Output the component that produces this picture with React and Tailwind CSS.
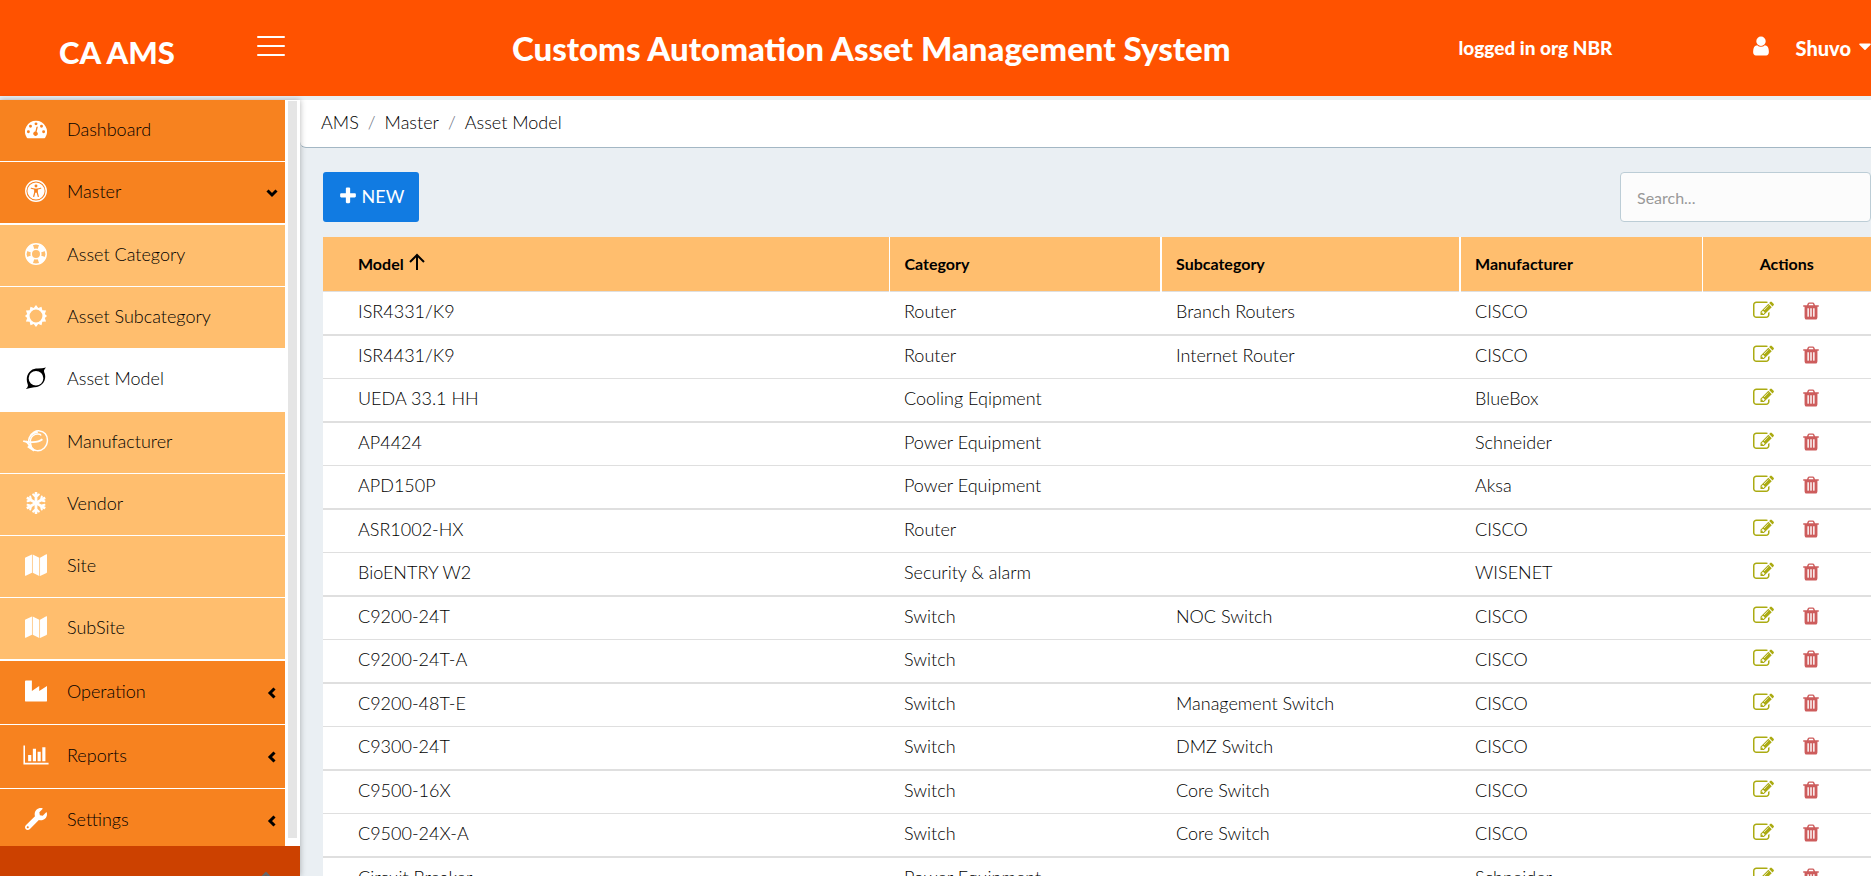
import { useState } from 'react'
import { FaSnowflake, FaWrench, FaChevronUp, FaCaretDown } from 'react-icons/fa'

const Svg = ({ box = '0 0 1792 1792', className, children }) => (
  <svg viewBox={box} className={className} fill="currentColor" aria-hidden="true">{children}</svg>
)

const Gauge = ({ className }) => (
  <Svg box="0 0 24 24" className={className}>
    <path fillRule="evenodd" d="M12 3A12 12 0 0 0 1.900 21.400Q2.200 22 2.900 22H21.100Q21.800 22 22.100 21.400A12 12 0 0 0 12 3ZM12 4.800a1.600 1.600 0 1 1 0 3.200a1.600 1.600 0 0 1 0-3.200ZM6 7.300a1.600 1.600 0 1 1 0 3.200a1.600 1.600 0 0 1 0-3.200ZM18 7.300a1.600 1.600 0 1 1 0 3.200a1.600 1.600 0 0 1 0-3.200ZM3.700 13.300a1.600 1.600 0 1 1 0 3.200a1.600 1.600 0 0 1 0-3.200ZM20.300 13.300a1.600 1.600 0 1 1 0 3.200a1.600 1.600 0 0 1 0-3.200ZM13.900 10.200L12.700 14.900A2.500 2.500 0 1 1 11.300 14.600L12.500 9.900Q12.800 9.200 13.400 9.300T13.900 10.200Z" />
  </Svg>
)

const Access = ({ className }) => (
  <svg viewBox="0 0 24 24" className={className} aria-hidden="true">
    <circle cx="12" cy="12" r="11.200" fill="none" stroke="currentColor" strokeWidth="1.500" />
    <circle cx="12" cy="12" r="9.400" fill="currentColor" />
    <circle cx="12" cy="6.600" r="1.600" fill="#f7821f" />
    <path d="M6.800 9L10.800 10V13L9.500 18M17.200 9L13.200 10V13L14.500 18" fill="none" stroke="#f7821f" strokeWidth="1.300" strokeLinecap="round" />
    <path d="M10.300 9.500H13.700V13.800H10.300Z" fill="#f7821f" />
  </svg>
)

const Ring = ({ className }) => (
  <svg viewBox="0 0 24 24" className={className} fill="none" stroke="currentColor" aria-hidden="true">
    <circle cx="12" cy="12" r="11.100" strokeWidth="1.700" />
    <circle cx="12" cy="12" r="5.200" strokeWidth="1.700" />
    <path d="M9.300 4A8.400 8.400 0 0 0 4 9.300M14.700 4A8.400 8.400 0 0 1 20 9.300M9.300 20A8.400 8.400 0 0 1 4 14.700M14.700 20A8.400 8.400 0 0 0 20 14.700" strokeWidth="6" />
  </svg>
)

const SunRing = ({ className }) => (
  <Svg box="0 0 24 24" className={className}>
    <path fillRule="evenodd" d="M12 0L14.500 3.300L18 1.800L18.900 5.700L23 5.900L21.600 9.800L24 12L21.600 14.200L23 18.100L18.900 18.300L18 22.200L14.500 20.700L12 24L9.500 20.700L6 22.200L5.100 18.300L1 18.100L2.400 14.200L0 12L2.400 9.800L1 5.900L5.100 5.700L6 1.800L9.500 3.300ZM12 5a7 7 0 1 0 0 14a7 7 0 0 0 0-14Z" />
  </Svg>
)

const Swirl = ({ className }) => (
  <Svg box="0 0 24 24" className={className}>
    <path fillRule="evenodd" d="M23 0.500C20 3.500 20.500 4.500 21.500 7C24 15 18 22.500 10 22Q6 22.500 1 24Q4 21 3 19C-0.500 10 5 2.500 12 1.700Q18 2 23 0.500ZM12 4.300a8 8 0 1 0 0 16a8 8 0 0 0 0-16Z" />
  </Svg>
)

const Yarn = ({ className }) => (
  <svg viewBox="0 0 24 24" className={className} fill="none" stroke="currentColor" strokeWidth="1.600" overflow="visible" aria-hidden="true">
    <path d="M5 8C7 3 12 0.500 16 1C21 1.500 24.500 5.500 24.500 11C24.500 18 19 23 13 22.500C7 22 3 17 4 11C5 6 9 3 14 2.500" />
    <path d="M10 22C5 18 4 10 9 6C12 3.500 17 4 17.500 6" />
    <path d="M-2 12C3 14 14 14 19 10" strokeWidth="2" />
    <path d="M3 18L10 22.500M1 12L7 19" strokeWidth="2" />
  </svg>
)

const MapIcon = ({ className }) => (
  <Svg box="0 0 24 24" className={className}>
    <path d="M7.600 0.500V20.500L0.800 23.800Q0 24 0 23.200V4.500Q0 4 0.500 3.700ZM8.400 0.500L15.600 4V24L8.400 20.500ZM16.400 4L23.200 0.400Q24 0 24 0.800V20Q24 20.400 23.500 20.700L16.400 24Z" />
  </Svg>
)

const Factory = ({ className }) => (
  <Svg box="0 0 24 24" className={className}>
    <path d="M1 0.500H7.500V12L15.500 6.500V12L24 6.500V23Q24 23.500 23.500 23.500H0.500Q0 23.500 0 23V1.500Q0 0.500 1 0.500Z" />
  </Svg>
)

const Bars = ({ className }) => (
  <Svg box="128 0 1792 1792" className={`${className} overflow-visible`}>
    <path d="M640 896v512h-256v-512h256zm384-512v1024h-256v-1024h256zm1024 1152v128h-2048v-1536h128v1408h1920zm-640-896v768h-256v-768h256zm384-384v1152h-256v-1152h256z" />
  </Svg>
)

const UserIcon = ({ className }) => (
  <Svg className={className}>
    <path d="M1536 1399q0 109-62.500 187t-150.500 78h-854q-88 0-150.500-78t-62.500-187q0-85 8.500-160.500t31.500-152 58.500-131 94-89 134.500-34.500q131 128 313 128t313-128q76 0 134.500 34.500t94 89 58.500 131 31.500 152 8.500 160.500zm-256-887q0 159-112.500 271.500t-271.500 112.500-271.500-112.500-112.500-271.500 112.500-271.500 271.500-112.500 271.500 112.500 112.500 271.500z" />
  </Svg>
)

const Plus = ({ className }) => (
  <Svg className={className}>
    <path d="M1600 736v192q0 40-28 68t-68 28h-416v416q0 40-28 68t-68 28h-192q-40 0-68-28t-28-68v-416h-416q-40 0-68-28t-28-68v-192q0-40 28-68t68-28h416v-416q0-40 28-68t68-28h192q40 0 68 28t28 68v416h416q40 0 68 28t28 68z" />
  </Svg>
)

const Edit = ({ className }) => (
  <Svg className={className}>
    <path d="M888 1184l116-116-152-152-116 116v56h96v96h56zm440-720q-16-16-33 1l-350 350q-17 17-1 33t33-1l350-350q17-17 1-33zm80 594v190q0 119-84.500 203.500t-203.500 84.500h-832q-119 0-203.500-84.500t-84.500-203.500v-832q0-119 84.500-203.500t203.500-84.500h832q63 0 117 25 15 7 18 23 3 17-9 29l-49 49q-14 14-32 8-23-6-45-6h-832q-66 0-113 47t-47 113v832q0 66 47 113t113 47h832q66 0 113-47t47-113v-126q0-13 9-22l64-64q15-15 35-7t20 29zm-96-738l288 288-672 672h-288v-288zm444 132l-92 92-288-288 92-92q28-28 68-28t68 28l152 152q28 28 28 68t-28 68z" />
  </Svg>
)

const Trash = ({ className }) => (
  <Svg className={className}>
    <path d="M704 1376v-704q0-14-9-23t-23-9h-64q-14 0-23 9t-9 23v704q0 14 9 23t23 9h64q14 0 23-9t9-23zm256 0v-704q0-14-9-23t-23-9h-64q-14 0-23 9t-9 23v704q0 14 9 23t23 9h64q14 0 23-9t9-23zm256 0v-704q0-14-9-23t-23-9h-64q-14 0-23 9t-9 23v704q0 14 9 23t23 9h64q14 0 23-9t9-23zm-544-992h448l-48-117q-7-9-17-11h-317q-10 2-17 11zm928 32v64q0 14-9 23t-23 9h-96v948q0 83-47 143.500t-113 60.500h-832q-66 0-113-58.500t-47-141.500v-952h-96q-14 0-23-9t-9-23v-64q0-14 9-23t23-9h309l70-167q15-37 54-63t79-26h320q40 0 79 26t54 63l70 167h309q14 0 23 9t9 23z" />
  </Svg>
)

const Chevron = ({ className }) => (
  <svg viewBox="0 0 12 12" className={className} fill="none" stroke="currentColor" strokeWidth="3" aria-hidden="true">
    <path d="M8.500 1.500L4 6L8.500 10.500" />
  </svg>
)

const masterItems = [
  { label: 'Asset Category', icon: Ring },
  { label: 'Asset Subcategory', icon: SunRing },
  { label: 'Asset Model', icon: Swirl, active: true },
  { label: 'Manufacturer', icon: Yarn },
  { label: 'Vendor', icon: FaSnowflake },
  { label: 'Site', icon: MapIcon },
  { label: 'SubSite', icon: MapIcon },
]

const groups = [
  { label: 'Operation', icon: Factory },
  { label: 'Reports', icon: Bars },
  { label: 'Settings', icon: FaWrench },
]

const rows = [
  ['ISR4331/K9', 'Router', 'Branch Routers', 'CISCO'],
  ['ISR4431/K9', 'Router', 'Internet Router', 'CISCO'],
  ['UEDA 33.1 HH', 'Cooling Eqipment', '', 'BlueBox'],
  ['AP4424', 'Power Equipment', '', 'Schneider'],
  ['APD150P', 'Power Equipment', '', 'Aksa'],
  ['ASR1002-HX', 'Router', '', 'CISCO'],
  ['BioENTRY W2', 'Security & alarm', '', 'WISENET'],
  ['C9200-24T', 'Switch', 'NOC Switch', 'CISCO'],
  ['C9200-24T-A', 'Switch', '', 'CISCO'],
  ['C9200-48T-E', 'Switch', 'Management Switch', 'CISCO'],
  ['C9300-24T', 'Switch', 'DMZ Switch', 'CISCO'],
  ['C9500-16X', 'Switch', 'Core Switch', 'CISCO'],
  ['C9500-24X-A', 'Switch', 'Core Switch', 'CISCO'],
  ['Circuit Breaker', 'Power Equipment', '', 'Schneider'],
]

function Header({ onToggle }) {
  return (
    <header className="flex h-24 shrink-0 items-center bg-[#ff5200] font-black text-white">
      <div className="flex w-[300px] shrink-0 items-center justify-between pr-[15px] pl-[59px]">
        <span className="pt-2 text-[31px] leading-10">CA AMS</span>
        <button type="button" aria-label="Toggle menu" onClick={onToggle} className="flex w-7 flex-col gap-[7px] pb-1">
          <span className="h-[2px] rounded-full bg-white" />
          <span className="h-[2px] rounded-full bg-white" />
          <span className="h-[2px] rounded-full bg-white" />
        </button>
      </div>
      <h1 className="flex-1 pr-4 text-center text-[33px] leading-10 whitespace-nowrap">Customs Automation Asset Management System</h1>
      <span className="w-[291px] shrink-0 text-[19px] whitespace-nowrap">logged in org NBR</span>
      <button type="button" className="flex shrink-0 items-center text-xl">
        <UserIcon className="mr-6 mb-1 size-[22px]" />
        Shuvo
        <FaCaretDown className="-mr-1 mb-1 ml-1 size-5" />
      </button>
    </header>
  )
}

function NavLink({ label, icon: Icon, active }) {
  return (
    <a href="#" aria-current={active ? 'page' : undefined}
      className={`flex items-center gap-5 pb-1 pl-[25px] ${active ? 'h-16 bg-white text-black' : 'h-[61px] bg-[#ffbe6e]'}`}>
      <Icon className={`size-[22px] ${active ? 'text-black' : 'text-white'}`} />
      {label}
    </a>
  )
}

function NavGroup({ label, icon: Icon, open, caret = true, onClick }) {
  return (
    <button type="button" onClick={onClick} aria-expanded={caret ? !!open : undefined}
      className="flex h-[61px] w-full shrink-0 items-center gap-5 bg-[#f7821f] pr-[7px] pb-1 pl-[25px] text-left">
      <Icon className="size-[22px] text-white" />
      <span className="flex-1">{label}</span>
      {caret && <Chevron className={`mt-1 size-3 ${open ? '-rotate-90' : ''}`} />}
    </button>
  )
}

function Sidebar() {
  const [open, setOpen] = useState(true)
  return (
    <aside className="z-10 flex w-[300px] shrink-0 flex-col bg-white shadow-[0_0_6px_rgba(0,0,0,0.3)]">
      <div className="flex min-h-0 flex-1">
        <nav className="flex w-[285px] flex-col gap-px overflow-hidden text-lg text-black">
          <NavGroup label="Dashboard" icon={Gauge} caret={false} />
          <NavGroup label="Master" icon={Access} open={open} onClick={() => setOpen(!open)} />
          {open && (
            <ul className="flex shrink-0 flex-col gap-px pt-px pb-px">
              {masterItems.map(item => (
                <li key={item.label} className={item.active ? '-my-px' : ''}><NavLink {...item} /></li>
              ))}
            </ul>
          )}
          {groups.map(g => (
            <div key={g.label} className="shrink-0 bg-[#f7821f] py-px"><NavGroup {...g} /></div>
          ))}
        </nav>
        {/* scroll track */}
        <div className="ml-[3px] mt-px mb-2 w-[9px] bg-[#e5e5e5]" />
      </div>
      <button type="button" aria-label="Collapse" className="flex h-[30px] shrink-0 items-start justify-end overflow-hidden bg-[#cc4100] pt-[22px] pr-[26px]">
        <FaChevronUp className="size-4 shrink-0 text-[#60686d]" />
      </button>
    </aside>
  )
}

function AssetTable() {
  return (
    <table className="w-full table-fixed border-collapse bg-white text-lg text-black">
      <colgroup>
        <col />
        <col className="w-[272px]" />
        <col className="w-[299px]" />
        <col className="w-[242px]" />
        <col className="w-[169px]" />
      </colgroup>
      <thead>
        <tr className="h-[54px] border-b border-[#dfdfdf] bg-[#ffbe6e] text-left text-base text-black">
          <th aria-sort="ascending" className="pl-[35px] font-bold">
            <button type="button" className="flex items-center gap-1">
              Model
              <svg viewBox="0 0 18 18" className="mb-1 size-[18px]" fill="none" stroke="currentColor" strokeWidth="2" aria-hidden="true">
                <path d="M9 17V2M2 9L9 2L16 9" />
              </svg>
            </button>
          </th>
          <th className="border-l border-white pl-[15px] font-bold">Category</th>
          <th className="border-l-2 border-white pl-[14px] font-bold">Subcategory</th>
          <th className="border-l-2 border-white pl-[14px] font-bold">Manufacturer</th>
          <th className="border-l border-white text-center font-bold">Actions</th>
        </tr>
      </thead>
      <tbody className="font-light">
        {rows.map(([model, category, sub, maker], i) => (
          <tr key={model} className={i % 2 ? 'h-[43px] border-b border-[#dfdfdf]' : 'h-11 border-b-2 border-[#dfdfdf]'}>
            <td className="pb-[3px] pl-[35px]">{model}</td>
            <td className="pb-[3px] pl-[15px]">{category}</td>
            <td className="pb-[3px] pl-[15px]">{sub}</td>
            <td className="pb-[3px] pl-[15px]">{maker}</td>
            <td>
              <div className="flex items-center justify-center gap-[27px] pb-1">
                <button type="button" aria-label={`Edit ${model}`} className="text-[#abab12]"><Edit className="size-[21px]" /></button>
                <button type="button" aria-label={`Delete ${model}`} className="text-[#cd5c5c]"><Trash className="size-5" /></button>
              </div>
            </td>
          </tr>
        ))}
      </tbody>
    </table>
  )
}

export default function App() {
  const [menu, setMenu] = useState(true)
  return (
    <div className="flex h-screen flex-col overflow-hidden bg-[#eaeff3] font-['Lato','Open_Sans',sans-serif] font-light">
      <Header onToggle={() => setMenu(!menu)} />
      <div className="flex min-h-0 flex-1 pt-1">
        {menu && <Sidebar />}
        <main className="min-w-0 flex-1">
          <nav aria-label="Breadcrumb" className="h-12 rounded-bl-md border-b border-[#a3b7c4] bg-white pl-[21px] text-lg">
            <ol className="flex h-[43px] items-center gap-[9px] text-black">
              <li><a href="#">AMS</a></li>
              <li className="text-gray-500">/</li>
              <li><a href="#">Master</a></li>
              <li className="text-gray-500">/</li>
              <li>Asset Model</li>
            </ol>
          </nav>
          <div className="pl-[23px]">
            <div className="flex items-center justify-between pt-6 pb-[15px]">
              <button type="button" className="flex h-[50px] w-24 items-center justify-center gap-1 rounded-[3px] bg-[#117be2] pb-[2px] text-lg font-normal text-white">
                <Plus className="size-5" />
                NEW
              </button>
              <input type="search" aria-label="Search" placeholder="Search..."
                className="h-[50px] w-[251px] rounded border border-[#bccdd6] bg-[#fcfcfc] px-4 text-base font-normal placeholder:text-[#999]" />
            </div>
            <AssetTable />
          </div>
        </main>
      </div>
    </div>
  )
}
